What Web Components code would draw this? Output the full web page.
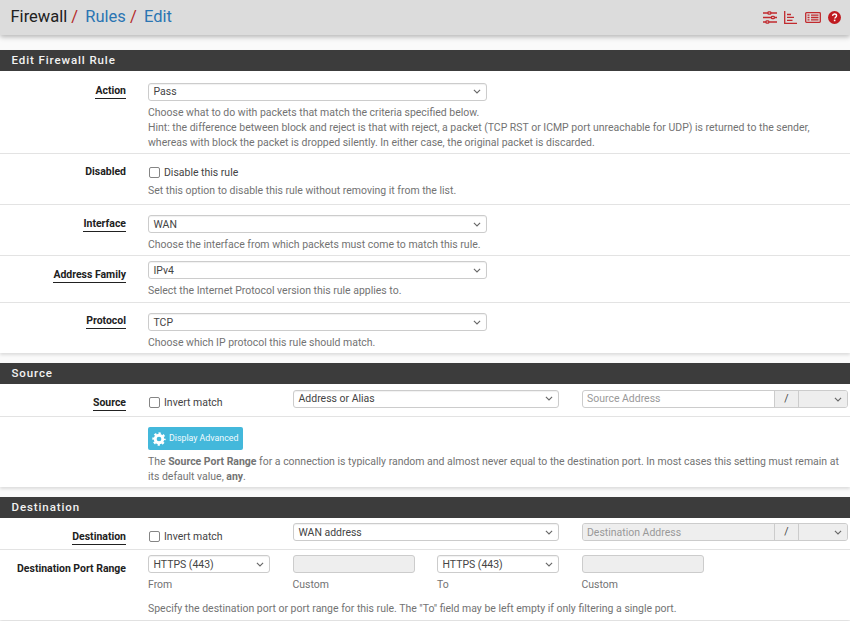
<!DOCTYPE html>
<html lang="en"><head><meta charset="utf-8"><title>Firewall / Rules / Edit</title>
<style>
html,body{margin:0;padding:0;height:621px;overflow:hidden;background:#fff}
body{font:10.48px/15px Roboto,sans-serif;color:#212121}
</style></head><body>
<fw-page>
<fw-header></fw-header>
<fw-panel title="Edit Firewall Rule" style="margin-top:15px">
  <fw-row label="Action" link h="83" lo="12" pad="12"><fw-select w="339" up>Pass</fw-select>
    <fw-help top="4">Choose what to do with packets that match the criteria specified below.<br>Hint: the difference between block and reject is that with reject, a packet (TCP RST or ICMP port unreachable for UDP) is returned to the sender,<br>whereas with block the packet is dropped silently. In either case, the original packet is discarded.</fw-help></fw-row>
  <fw-row label="Disabled" h="51" lo="10" pad="12"><fw-check>Disable this rule</fw-check><fw-help top="4">Set this option to disable this rule without removing it from the list.</fw-help></fw-row>
  <fw-row label="Interface" link h="51" lo="11" pad="10"><fw-select w="339">WAN</fw-select><fw-help top="3.5">Choose the interface from which packets must come to match this rule.</fw-help></fw-row>
  <fw-row label="Address Family" link h="47" lo="11" pad="5"><fw-select w="339">IPv4</fw-select><fw-help top="4">Select the Internet Protocol version this rule applies to.</fw-help></fw-row>
  <fw-row label="Protocol" link h="50" last lo="10" pad="10"><fw-select w="339">TCP</fw-select><fw-help top="4">Choose which IP protocol this rule should match.</fw-help></fw-row>
</fw-panel>
<fw-panel title="Source" style="margin-top:10px">
  <fw-row label="Source" link h="33" lo="11" pad="6"><fw-addr mode="src"></fw-addr></fw-row>
  <fw-row label="" h="70" last lo="10" pad="10"><fw-adv></fw-adv><fw-help top="3.5">The <b>Source Port Range</b> for a connection is typically random and almost never equal to the destination port. In most cases this setting must remain at<br>its default value, <b>any</b>.</fw-help></fw-row>
</fw-panel>
<fw-panel title="Destination" style="margin-top:10px">
  <fw-row label="Destination" link h="32" lo="11" pad="5"><fw-addr mode="dst"></fw-addr></fw-row>
  <fw-row label="Destination Port Range" h="70" last lo="11" pad="5"><fw-ports></fw-ports><fw-help top="9">Specify the destination port or port range for this rule. The "To" field may be left empty if only filtering a single port.</fw-help></fw-row>
</fw-panel>
</fw-page>
<script>
function def(name,css,html,init){
  customElements.define(name,class extends HTMLElement{
    connectedCallback(){
      if(this.shadowRoot)return;
      const r=this.attachShadow({mode:'open'});
      r.innerHTML='<style>'+css+'</style>'+(typeof html==='function'?html(this):html);
      if(init)init(this,r);
    }
  });
}
const chev='<svg width="8" height="5" viewBox="0 0 8 5"><path d="M.9.9 4 3.900 7.100.9" fill="none" stroke="#666" stroke-width="1.1"/></svg>';
def('fw-page',':host{display:block;width:850px;height:621px;overflow:hidden;background:#fafafa;position:relative}','<slot></slot>');
def('fw-header',`
:host{display:flex;align-items:center;height:35px;background:#dcdcdc;box-shadow:0 2px 5px rgba(0,0,0,.28);padding:0 9px 0 10.5px;font-size:16.5px;position:relative}
nav{flex:1;display:flex;align-items:baseline;position:relative;top:-1px}
a{color:#2a75b3}span{color:#b52a2a;margin:0 7.3px 0 4px;}
.ic{display:flex;align-items:center}
svg{display:block;flex:none}`,
`<nav><b style="font-weight:400;color:#212121">Firewall</b><span>/</span><a>Rules</a><span>/</span><a>Edit</a></nav>
<div class="ic">
<svg width="14" height="13" viewBox="0 0 14 13" fill="none" stroke="#c12a2e" stroke-width="1.500"><path d="M0 2h14M0 6.500h14M0 11h14"/><g fill="#dcdcdc" stroke-width="1.300"><rect x="5" y=".8" width="2.800" height="2.400" rx=".8"/><rect x="8.500" y="5.300" width="2.800" height="2.400" rx=".8"/><rect x="3" y="9.800" width="2.800" height="2.400" rx=".8"/></g></svg>
<svg width="13" height="13" viewBox="0 0 13 13" fill="none" stroke="#c12a2e" stroke-width="1.300" style="margin-left:7px"><path d="M.7 0v12.300H13"/><path d="M3 3.500h4M3 6.300h7M3 9.300h5.500" stroke-width="1.300"/></svg>
<svg width="16" height="11" viewBox="0 0 16 11" fill="none" stroke="#c12a2e" stroke-width="1.300" style="margin-left:8px"><rect x=".7" y=".7" width="14.600" height="9.600" rx=".8"/><path d="M2.500 3.200h2M2.500 5.500h2M2.500 7.800h2M6 3.200h7.500M6 5.500h7.500M6 7.800h7.500" stroke-width="1.300"/></svg>
<svg width="13" height="13" viewBox="0 0 14 14" style="margin-left:7px"><circle cx="7" cy="7" r="7" fill="#c01b20"/><path d="M4.900 5.300c.1-1.300 1-2 2.200-2 1.200 0 2.100.8 2.100 1.800 0 1.500-1.900 1.600-1.900 3.100" fill="none" stroke="#fff" stroke-width="1.500"/><rect x="6.300" y="9.300" width="1.700" height="1.700" fill="#fff"/></svg>
</div>`);
def('fw-panel',`
:host{display:block;background:#fff;box-shadow:0 2px 3px rgba(0,0,0,.12)}
h2{margin:0;height:21px;background:#3c3c3c;color:#f2f2f2;font:500 11.5px/21px Roboto,sans-serif;letter-spacing:.9px;padding-left:11.5px}`,
t=>`<h2>${t.getAttribute('title')}</h2><slot></slot>`);
def('fw-row',`
:host{display:flex;box-sizing:border-box;border-bottom:1px solid #e3e3e3}
:host([last]){border-bottom:0}
.l{width:126px;flex:none;text-align:right;font-weight:700;color:#212121;box-sizing:border-box}
.l u{text-decoration:none;border-bottom:1px solid #212121;padding-bottom:1px}
.c{margin-left:22px;flex:1;min-width:0}`,
t=>{const l=t.getAttribute('label');return `<div class="l" style="padding-top:${t.getAttribute('lo')}px">${l?(t.hasAttribute('link')?`<u>${l}</u>`:l):''}</div><div class="c" style="padding-top:${t.getAttribute('pad')}px"><slot></slot></div>`},
(t)=>{t.style.height=t.getAttribute('h')+'px';});
def('fw-select',`
:host{display:flex;align-items:center;justify-content:space-between;box-sizing:border-box;height:18px;flex:none;border:1px solid #ccc;border-radius:3px;background:#fff;padding:0 5px 0 4.5px;color:#444;box-shadow:inset 0 1px 1px rgba(0,0,0,.06)}
:host([up]){padding-bottom:1px}`,
t=>{t.style.width=(t.getAttribute('w')||122)+'px';return `<slot></slot>${chev}`;});
def('fw-help',`:host{display:block;color:#737373;line-height:15px;white-space:nowrap}`,
t=>{t.style.marginTop=t.getAttribute('top')+'px';return '<slot></slot>';});
def('fw-check',`
:host{display:flex;align-items:center;height:14px;margin-top:-1px;color:#444;white-space:nowrap}
i{width:11px;height:11px;box-sizing:border-box;border:1px solid #858585;border-radius:2px;background:#fff;margin:0 4px 0 1px;flex:none}`,
'<i></i><slot></slot>');
def('fw-addr',`
:host{display:flex;height:18px}
.a{width:145px;flex:none}
.f{display:flex;margin-left:23px;width:266px;height:18px;flex:none;box-sizing:border-box;border:1px solid #ccc;border-radius:3px;overflow:hidden;background:#fff;color:#999}
.t{flex:1;padding-left:4px;line-height:16px}
.dis .t{line-height:17px}
.sl{width:24px;box-sizing:border-box;background:#eee;border-left:1px solid #ccc;text-align:center;line-height:16px;color:#444}
.m{width:49px;background:#eee;border-left:1px solid #ccc;display:flex;align-items:center;justify-content:flex-end;padding-right:5px;box-sizing:border-box}
.dis,.dis .t{background:#eee}
fw-check{margin-top:5px}
.dis2 fw-check{margin-top:6px}`,
t=>{const d=t.getAttribute('mode')==='dst';return `<div class="a ${d?'dis2':''}"><fw-check>Invert match</fw-check></div><fw-select w="266" ${d?'':'up'}>${d?'WAN address':'Address or Alias'}</fw-select><div class="f ${d?'dis':''}"><div class="t">${d?'Destination Address':'Source Address'}</div><div class="sl">/</div><div class="m">${chev}</div></div>`});
def('fw-adv',`
:host{display:flex;align-items:center;height:23px;width:95px;box-sizing:border-box;border-radius:2px;background:#43b8db;color:#f2fbfe;font-size:8.8px;padding-left:4px;white-space:nowrap}
svg{margin-right:3px;flex:none}`,
`<svg width="14" height="14" viewBox="0 0 14 14" fill="none" stroke="#fff"><circle cx="7" cy="7" r="3.800" stroke-width="2.900"/><circle cx="7" cy="7" r="5.700" stroke-width="2" stroke-dasharray="2.300 2.177" stroke-dashoffset="1.150"/></svg>Display Advanced`);
def('fw-ports',`
:host{display:flex}
.col{display:block;width:144.5px;flex:none}
.in{box-sizing:border-box;width:122px;height:18px;border:1px solid #ccc;border-radius:3px;background:#eee}
.cap{margin-top:3.5px;line-height:15px;color:#737373;display:block}`,
`<div class="col"><fw-select w="122">HTTPS (443)</fw-select><span class="cap">From</span></div>
<div class="col"><div class="in"></div><span class="cap">Custom</span></div>
<div class="col"><fw-select w="122">HTTPS (443)</fw-select><span class="cap">To</span></div>
<div class="col"><div class="in"></div><span class="cap">Custom</span></div>`);
</script>
</body></html>
